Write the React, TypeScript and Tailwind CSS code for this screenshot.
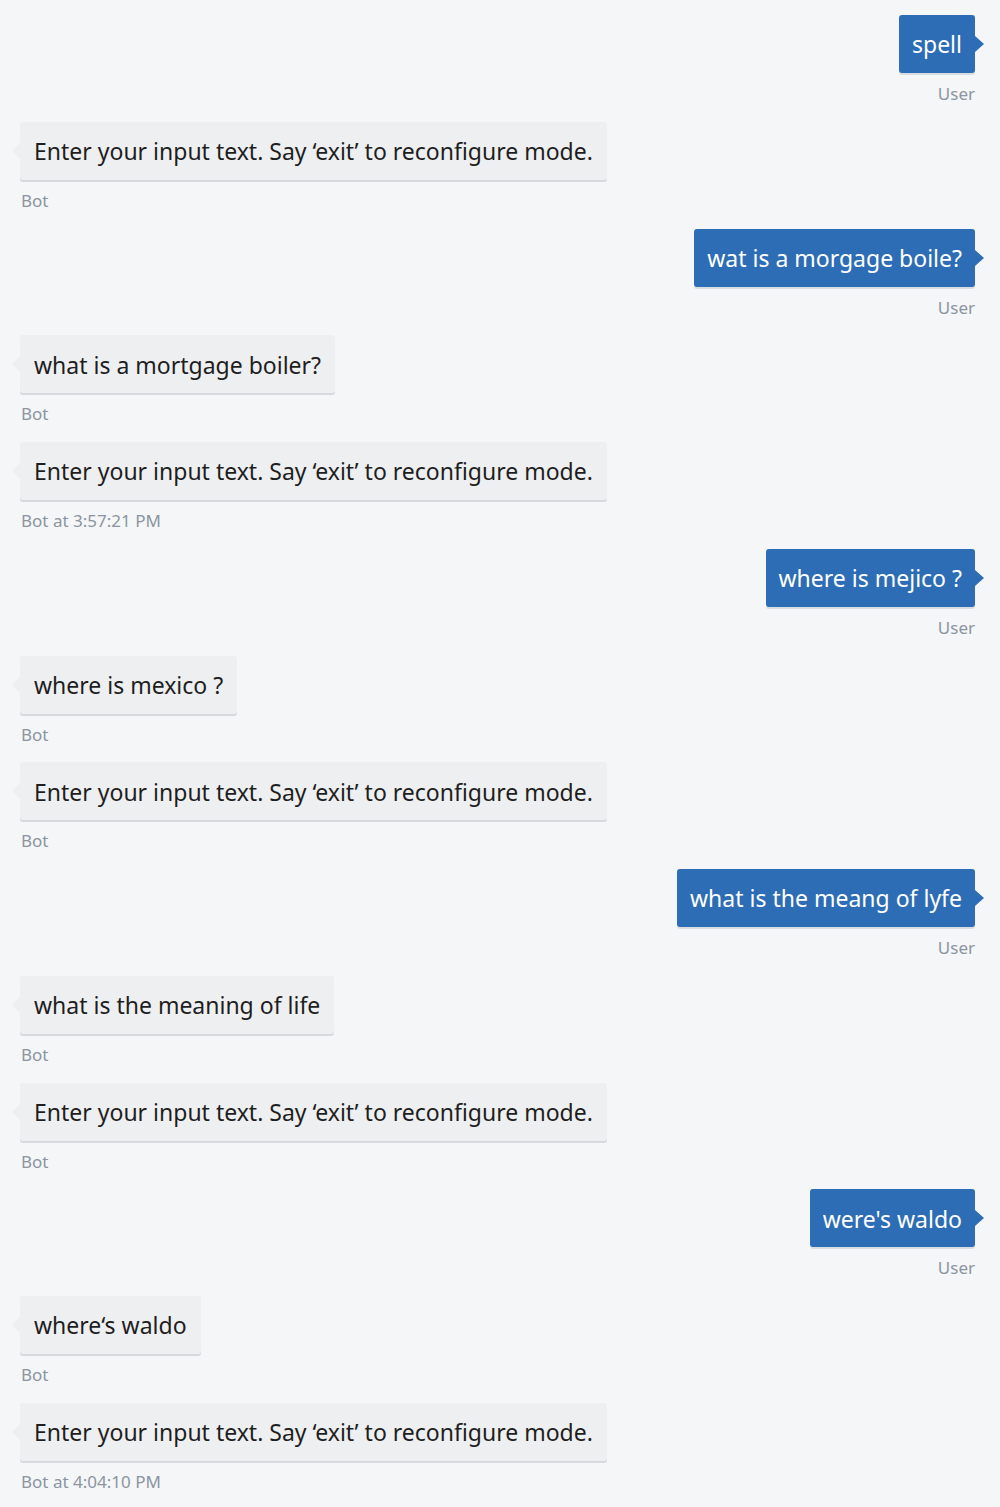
import React from "react";

type Msg = { from: "user" | "bot"; text: string; label: string };

const messages: Msg[] = [
  { from: "user", text: "spell", label: "User" },
  { from: "bot", text: "Enter your input text. Say \u2018exit\u2019 to reconfigure mode.", label: "Bot" },
  { from: "user", text: "wat is a morgage boile?", label: "User" },
  { from: "bot", text: "what is a mortgage boiler?", label: "Bot" },
  { from: "bot", text: "Enter your input text. Say \u2018exit\u2019 to reconfigure mode.", label: "Bot at 3:57:21 PM" },
  { from: "user", text: "where is mejico ?", label: "User" },
  { from: "bot", text: "where is mexico ?", label: "Bot" },
  { from: "bot", text: "Enter your input text. Say \u2018exit\u2019 to reconfigure mode.", label: "Bot" },
  { from: "user", text: "what is the meang of lyfe", label: "User" },
  { from: "bot", text: "what is the meaning of life", label: "Bot" },
  { from: "bot", text: "Enter your input text. Say \u2018exit\u2019 to reconfigure mode.", label: "Bot" },
  { from: "user", text: "were's waldo", label: "User" },
  { from: "bot", text: "where\u2018s waldo", label: "Bot" },
  { from: "bot", text: "Enter your input text. Say \u2018exit\u2019 to reconfigure mode.", label: "Bot at 4:04:10 PM" },
];

const UserBubble = ({ text }: { text: string }) => (
  <div className="relative">
    <div className="h-[58px] flex items-center px-[13px] pt-[1px] rounded-[3px] bg-[#2d6db5] text-white text-[23px] shadow-[0_2px_0_#d9dde2]">
      {text}
    </div>
    <svg className="absolute right-[-10px] top-[21px]" width="10" height="16" viewBox="0 0 10 16">
      <path d="M0 0 L9 8 L0 16 Z" fill="#2d6db5" />
    </svg>
  </div>
);

const BotBubble = ({ text }: { text: string }) => (
  <div className="relative">
    <div className="h-[58px] flex items-center px-[14px] pt-[1px] rounded-[3px] bg-[#eeeff1] text-[#1e1e1e] text-[23px] shadow-[0_2px_0_#d6d9dd]">
      {text}
    </div>
    <svg className="absolute left-[-8px] top-[21px]" width="8" height="16" viewBox="0 0 8 16">
      <path d="M8 0 L0 8 L8 16 Z" fill="#eeeff1" />
    </svg>
  </div>
);

export default function App() {
  return (
    <div
      className="min-h-screen w-[1000px] bg-[#f5f6f7] pt-[15px] pr-[25px] pl-[20px]"
      style={{ fontFamily: "'Noto Sans', 'Open Sans', sans-serif" }}
    >
      <div className="flex flex-col gap-[17.77px]">
        {messages.map((m, i) => (
          <div key={i} className={`flex flex-col ${m.from === "user" ? "items-end" : "items-start"}`}>
            {m.from === "user" ? <UserBubble text={m.text} /> : <BotBubble text={m.text} />}
            <div className={`mt-[11px] h-[20px] leading-[20px] text-[17px] text-[#8a95a1] ${m.from === "bot" ? "pl-[1px]" : ""}`}>
              {m.label}
            </div>
          </div>
        ))}
      </div>
    </div>
  );
}
